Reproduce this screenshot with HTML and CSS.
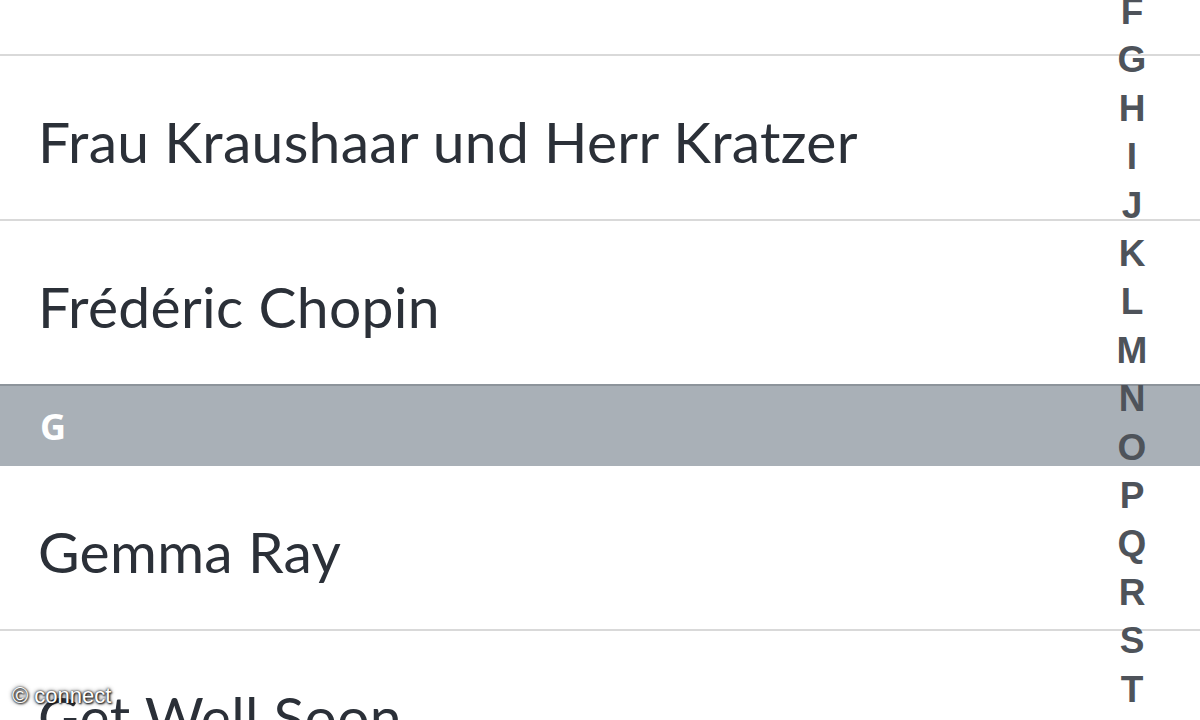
FILE: index.html
```html
<!DOCTYPE html>
<html>
<head>
<meta charset="utf-8">
<link rel="stylesheet" href="styles.css">
</head>
<body>
<div class="screen">
  <div class="list">
    <div class="row row-top"></div>
    <div class="row"><span class="name">Frau Kraushaar und Herr Kratzer</span></div>
    <div class="row row-last"><span class="name">Frédéric Chopin</span></div>
    <div class="section">G</div>
    <div class="row"><span class="name">Gemma Ray</span></div>
    <div class="row"><span class="name">Get Well Soon</span></div>
  </div>
  <div class="index">
    <span>F</span><span>G</span><span>H</span><span>I</span><span>J</span><span>K</span><span>L</span><span>M</span><span>N</span><span>O</span><span>P</span><span>Q</span><span>R</span><span>S</span><span>T</span>
  </div>
  <div class="watermark">© connect</div>
</div>
</body>
</html>
```
FILE: styles.css
```css
html, body {
  margin: 0;
  padding: 0;
  background: #ffffff;
}
.screen {
  position: relative;
  width: 1200px;
  height: 720px;
  overflow: hidden;
  background: #ffffff;
}
.list {
  display: flex;
  flex-direction: column;
}
.row {
  height: 163px;
  box-sizing: content-box;
  border-bottom: 2px solid #d9d9d9;
  display: flex;
  align-items: center;
  padding-left: 38px;
  flex-shrink: 0;
}
.row-top {
  height: 54px;
}
.row-last {
  border-bottom: none;
}
.name {
  font-family: Lato, "Open Sans", sans-serif;
  font-size: 57px;
  letter-spacing: 0.3px;
  color: #2b3038;
  line-height: 1;
  padding-top: 7px;
}
.section {
  height: 80px;
  border-top: 2px solid #8d949b;
  background: #a9b0b7;
  display: flex;
  align-items: center;
  padding-left: 40px;
  font-family: "Open Sans", Lato, sans-serif;
  font-weight: 700;
  font-size: 36px;
  color: #ffffff;
  flex-shrink: 0;
}
.index {
  position: absolute;
  top: -12px;
  left: 1108px;
  width: 48px;
  display: flex;
  flex-direction: column;
  align-items: center;
  font-family: "Liberation Sans", Arial, sans-serif;
  font-weight: 700;
  font-size: 37px;
  line-height: 48.4px;
  color: #4e535a;
}
.watermark {
  position: absolute;
  left: 12px;
  top: 683px;
  font-family: "Liberation Sans", Arial, sans-serif;
  font-size: 22px;
  color: #ffffff;
  text-shadow: 0 0 2px #222, 0 0 4px #333, 1px 1px 2px #000;
}
```
